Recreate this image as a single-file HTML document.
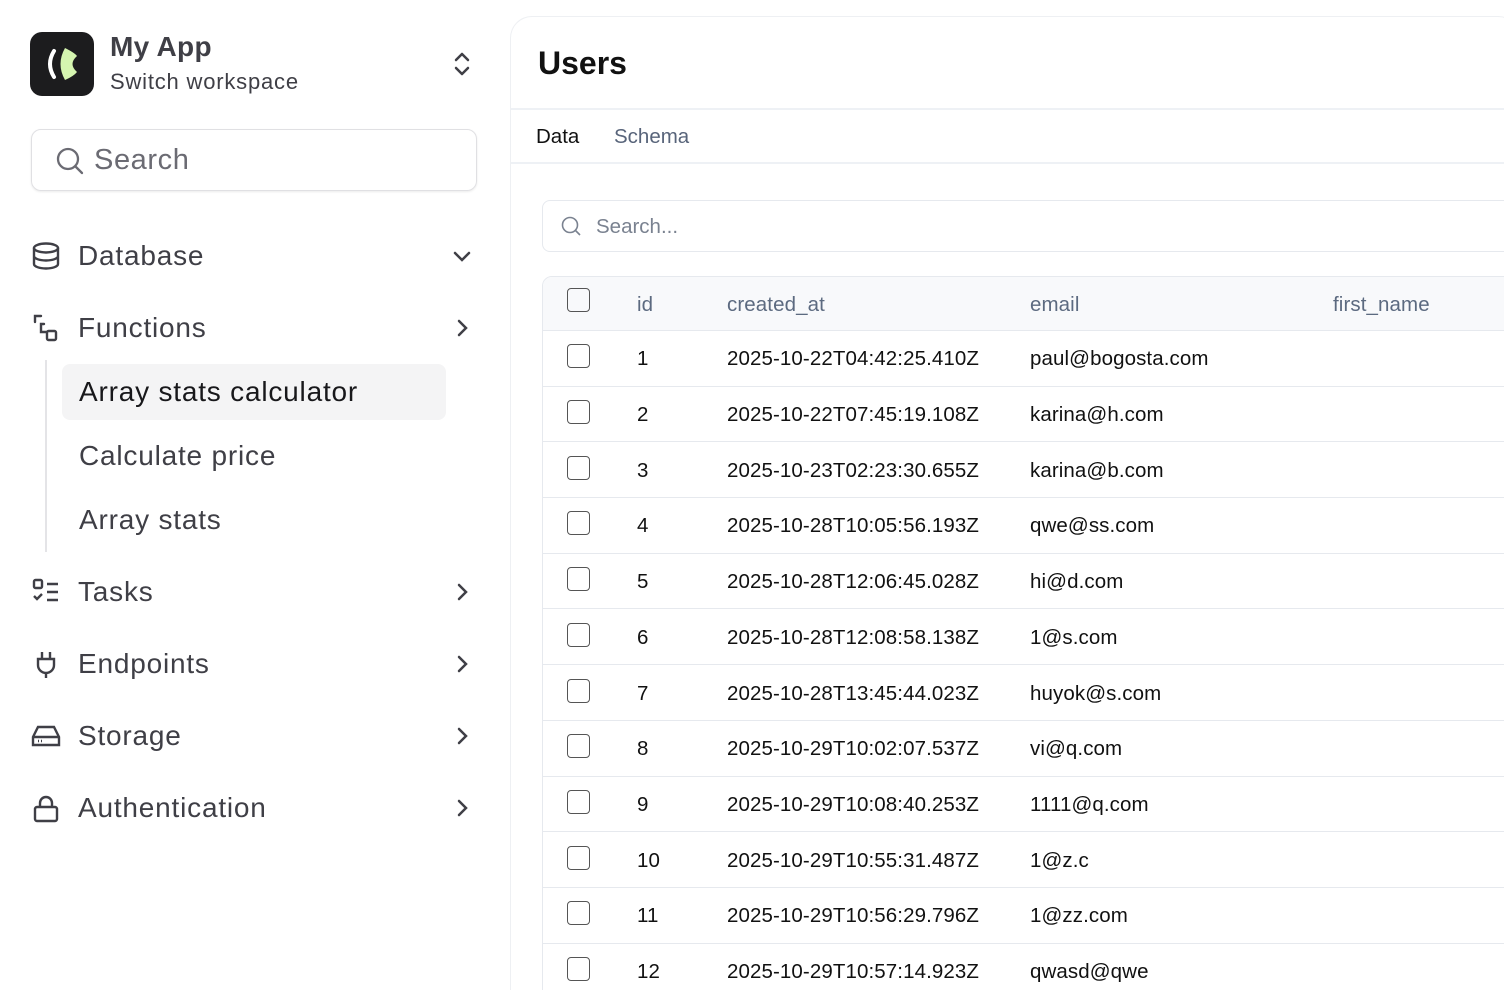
<!DOCTYPE html>
<html><head><meta charset="utf-8"><style>
*{box-sizing:border-box;margin:0;padding:0}
html,body{width:1504px;height:990px;overflow:hidden}
body{background:#fff;font-family:"Liberation Sans",sans-serif;position:relative;color:#3f3f46}
.abs{position:absolute}
.nav{position:absolute;left:30px;width:450px;height:56px;display:flex;align-items:center;font-size:28px;color:#3f3f46;letter-spacing:0.8px}
.nav svg.ic{width:32px;height:32px;margin-right:16px}
.nav .chev{position:absolute;right:6px;top:16px}
.sub{position:absolute;left:62px;width:384px;height:56px;display:flex;align-items:center;padding-left:17px;font-size:28px;color:#3f3f46;border-radius:8px;letter-spacing:0.8px}
.card{position:absolute;left:510px;top:16px;width:1010px;height:1000px;border:1px solid #eef0f3;border-radius:22px;border-right:none}
.tbl{position:absolute;left:542px;top:276px;width:980px;height:730px;border:1px solid #e6e9ee;border-radius:10px;overflow:hidden}
.row{position:absolute;left:0;width:980px;height:55.7px;border-bottom:1px solid #e6e9ee;font-size:20.5px;color:#111;letter-spacing:0.1px}
.row span{position:absolute;top:50%;transform:translateY(-45%)}
.cb{position:absolute;left:24px;top:50%;margin-top:-14px;width:23px;height:24px;border:1.5px solid #555;border-radius:4px}
</style></head><body>
<div class="abs" style="left:30px;top:32px;width:64px;height:64px;background:#1c1c1e;border-radius:12px">
<svg width="64" height="64" viewBox="0 0 64 64"><path d="M24 19 Q16 32 24 45" stroke="#fff" stroke-width="4" fill="none" stroke-linecap="round"/><path d="M35 16 Q45 21 47 24 Q38 32 47 40 Q44 44 35 48 Q26 32 35 16Z" fill="#d5f5b0"/></svg></div>
<div class="abs" style="left:110px;top:31px;font-size:28px;font-weight:bold;color:#3f3f46;letter-spacing:0.3px">My App</div>
<div class="abs" style="left:110px;top:69px;font-size:22px;color:#3f3f46;letter-spacing:0.8px">Switch workspace</div>
<svg class="abs" style="left:450px;top:50px" width="24" height="28" viewBox="0 0 24 28"><path d="M6 10 L12 4 L18 10 M6 18 L12 24 L18 18" stroke="#3f3f46" stroke-width="2.5" fill="none" stroke-linecap="round" stroke-linejoin="round"/></svg>
<div class="abs" style="left:31px;top:129px;width:446px;height:62px;border:1.5px solid #e0e0e3;border-radius:10px;box-shadow:0 1px 2px rgba(0,0,0,.08)"></div>
<svg class="abs" style="left:55px;top:146px" width="30" height="30" viewBox="0 0 30 30"><circle cx="13" cy="13" r="10" stroke="#6b6b73" stroke-width="2.3" fill="none"/><path d="M20.5 20.5 L27 27" stroke="#6b6b73" stroke-width="2.3" stroke-linecap="round"/></svg>
<div class="abs" style="left:94px;top:144px;font-size:29px;color:#6b6b73;letter-spacing:0.6px">Search</div>

<div class="nav" style="top:228px"><svg class="ic" viewBox="0 0 32 32" fill="none" stroke="#3f3f46" stroke-width="2.4"><ellipse cx="16" cy="8" rx="12" ry="4.5"/><path d="M4 8v16c0 2.5 5.4 4.5 12 4.5s12-2 12-4.5V8M4 16c0 2.5 5.4 4.5 12 4.5s12-2 12-4.5"/></svg>Database
<svg class="chev" width="24" height="24" viewBox="0 0 24 24"><path d="M5 9l7 7 7-7" stroke="#3f3f46" stroke-width="2.5" fill="none" stroke-linecap="round"/></svg></div>
<div class="nav" style="top:300px"><svg class="ic" viewBox="0 0 32 32" fill="none" stroke="#3f3f46" stroke-width="2.4" stroke-linecap="round"><path d="M11 4H5v6"/><path d="M14 12h-3v8h6"/><rect x="17" y="19" width="9" height="9" rx="1.5"/></svg>Functions
<svg class="chev" width="24" height="24" viewBox="0 0 24 24"><path d="M9 5l7 7-7 7" stroke="#3f3f46" stroke-width="2.5" fill="none" stroke-linecap="round"/></svg></div>
<div class="abs" style="left:45px;top:360px;width:2px;height:192px;background:#e4e4e7"></div>
<div class="sub" style="top:364px;background:#f4f4f5;color:#18181b">Array stats calculator</div>
<div class="sub" style="top:428px">Calculate price</div>
<div class="sub" style="top:492px">Array stats</div>
<div class="nav" style="top:564px"><svg class="ic" viewBox="0 0 32 32" fill="none" stroke="#3f3f46" stroke-width="2.4"><rect x="4" y="4" width="8" height="8" rx="1.5"/><path d="M4 20l3 3 5-5M17 8h11M17 16h11M17 24h11"/></svg>Tasks
<svg class="chev" width="24" height="24" viewBox="0 0 24 24"><path d="M9 5l7 7-7 7" stroke="#3f3f46" stroke-width="2.5" fill="none" stroke-linecap="round"/></svg></div>
<div class="nav" style="top:636px"><svg class="ic" viewBox="0 0 32 32" fill="none" stroke="#3f3f46" stroke-width="2.4"><path d="M12 4v7M20 4v7M8 11h16v6a8 8 0 0 1-16 0zM16 25v5"/></svg>Endpoints
<svg class="chev" width="24" height="24" viewBox="0 0 24 24"><path d="M9 5l7 7-7 7" stroke="#3f3f46" stroke-width="2.5" fill="none" stroke-linecap="round"/></svg></div>
<div class="nav" style="top:708px"><svg class="ic" viewBox="0 0 32 32" fill="none" stroke="#3f3f46" stroke-width="2.4"><path d="M3 17l5-10h16l5 10v8H3zM3 17h26"/><path d="M8 21h1M11 21h1"/></svg>Storage
<svg class="chev" width="24" height="24" viewBox="0 0 24 24"><path d="M9 5l7 7-7 7" stroke="#3f3f46" stroke-width="2.5" fill="none" stroke-linecap="round"/></svg></div>
<div class="nav" style="top:780px"><svg class="ic" viewBox="0 0 32 32" fill="none" stroke="#3f3f46" stroke-width="2.4"><rect x="5" y="15" width="22" height="14" rx="2"/><path d="M10 15v-4a6 6 0 0 1 12 0v4"/></svg>Authentication
<svg class="chev" width="24" height="24" viewBox="0 0 24 24"><path d="M9 5l7 7-7 7" stroke="#3f3f46" stroke-width="2.5" fill="none" stroke-linecap="round"/></svg></div>

<div class="card"></div>
<div class="abs" style="left:538px;top:45px;font-size:32px;font-weight:bold;color:#111;letter-spacing:0px">Users</div>
<div class="abs" style="left:511px;top:108px;width:1000px;height:2px;background:#eef1f5"></div>
<div class="abs" style="left:536px;top:125px;font-size:20.5px;color:#111">Data</div>
<div class="abs" style="left:614px;top:125px;font-size:20.5px;color:#58647a">Schema</div>
<div class="abs" style="left:511px;top:162px;width:1000px;height:2px;background:#eef1f5"></div>
<div class="abs" style="left:542px;top:200px;width:980px;height:52px;border:1px solid #e6e9ee;border-radius:8px"></div>
<svg class="abs" style="left:560px;top:215px" width="22" height="22" viewBox="0 0 22 22"><circle cx="10" cy="10" r="7.5" stroke="#7a8290" stroke-width="1.6" fill="none"/><path d="M15.5 15.5L20 20" stroke="#7a8290" stroke-width="1.6"/></svg>
<div class="abs" style="left:596px;top:215px;font-size:20.5px;color:#7a8290">Search...</div>

<div class="tbl">
<div class="row" style="top:0;height:54px;background:#f8f9fb;color:#5c6a80"><div class="cb" style="margin-top:-16px"></div><span style="left:94px">id</span><span style="left:184px">created_at</span><span style="left:487px">email</span><span style="left:790px">first_name</span></div>
<div class="row" style="top:54px"><div class="cb"></div><span style="left:94px">1</span><span style="left:184px">2025-10-22T04:42:25.410Z</span><span style="left:487px">paul@bogosta.com</span></div>
<div class="row" style="top:109.7px"><div class="cb"></div><span style="left:94px">2</span><span style="left:184px">2025-10-22T07:45:19.108Z</span><span style="left:487px">karina@h.com</span></div>
<div class="row" style="top:165.4px"><div class="cb"></div><span style="left:94px">3</span><span style="left:184px">2025-10-23T02:23:30.655Z</span><span style="left:487px">karina@b.com</span></div>
<div class="row" style="top:221.1px"><div class="cb"></div><span style="left:94px">4</span><span style="left:184px">2025-10-28T10:05:56.193Z</span><span style="left:487px">qwe@ss.com</span></div>
<div class="row" style="top:276.8px"><div class="cb"></div><span style="left:94px">5</span><span style="left:184px">2025-10-28T12:06:45.028Z</span><span style="left:487px">hi@d.com</span></div>
<div class="row" style="top:332.5px"><div class="cb"></div><span style="left:94px">6</span><span style="left:184px">2025-10-28T12:08:58.138Z</span><span style="left:487px">1@s.com</span></div>
<div class="row" style="top:388.2px"><div class="cb"></div><span style="left:94px">7</span><span style="left:184px">2025-10-28T13:45:44.023Z</span><span style="left:487px">huyok@s.com</span></div>
<div class="row" style="top:443.9px"><div class="cb"></div><span style="left:94px">8</span><span style="left:184px">2025-10-29T10:02:07.537Z</span><span style="left:487px">vi@q.com</span></div>
<div class="row" style="top:499.6px"><div class="cb"></div><span style="left:94px">9</span><span style="left:184px">2025-10-29T10:08:40.253Z</span><span style="left:487px">1111@q.com</span></div>
<div class="row" style="top:555.3px"><div class="cb"></div><span style="left:94px">10</span><span style="left:184px">2025-10-29T10:55:31.487Z</span><span style="left:487px">1@z.c</span></div>
<div class="row" style="top:611px"><div class="cb"></div><span style="left:94px">11</span><span style="left:184px">2025-10-29T10:56:29.796Z</span><span style="left:487px">1@zz.com</span></div>
<div class="row" style="top:666.7px"><div class="cb"></div><span style="left:94px">12</span><span style="left:184px">2025-10-29T10:57:14.923Z</span><span style="left:487px">qwasd@qwe</span></div>
</div>
</body></html>
